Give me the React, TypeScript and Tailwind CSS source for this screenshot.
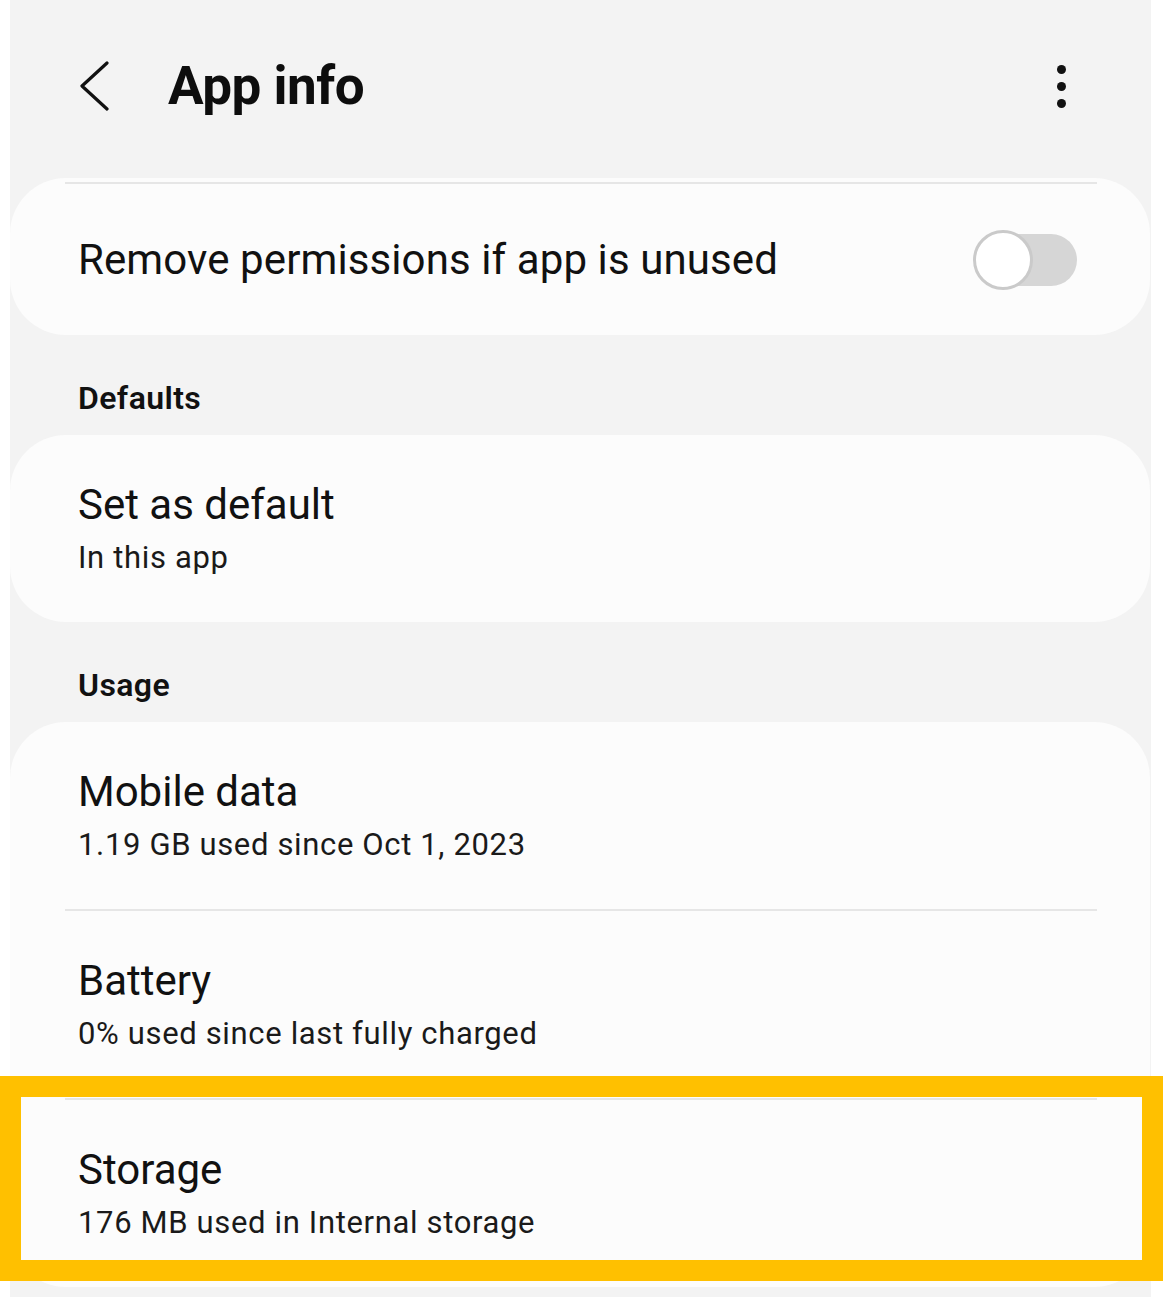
const font = { fontFamily: 'Roboto, "Noto Sans", sans-serif' };

function Divider() {
  return <div className="ml-[55px] mr-[53px] h-[2px] bg-[#e6e6e6]" />;
}

function Row({ title, sub }: { title: string; sub: string }) {
  return (
    <div className="pl-[68px] pt-[45px] pb-[44px]">
      <p className="text-[42px] leading-[50px] text-[#111]">{title}</p>
      <p className="mt-[8px] text-[31px] leading-[40px] tracking-[0.65px] text-[#1a1a1a]">{sub}</p>
    </div>
  );
}

function SectionLabel({ label }: { label: string }) {
  return (
    <div className="h-[100px] pl-[68px] pt-[46px]">
      <p className="text-[32px] leading-[34px] font-semibold tracking-[0.4px] text-[#111]">{label}</p>
    </div>
  );
}

function Toggle() {
  return (
    <div className="relative h-[60px] w-[104px]">
      {/* track */}
      <div className="absolute left-[16px] right-0 top-[4px] h-[52px] rounded-full bg-[#d6d6d6]" />
      {/* thumb */}
      <div className="absolute left-0 top-0 h-[60px] w-[60px] rounded-full border-[3px] border-[#cacaca] bg-white" />
    </div>
  );
}

function BackChevron() {
  return (
    <svg width="32" height="50" viewBox="0 0 32 50" className="ml-[68px]">
      <polyline points="29,2 4,25 29,48" fill="none" stroke="#111" strokeWidth="3.2" strokeLinecap="round" strokeLinejoin="round" />
    </svg>
  );
}

export default function App() {
  return (
    <div className="relative h-[1297px] w-[1163px] overflow-hidden bg-white" style={font}>
      <div className="ml-[10px] h-full w-[1141px] bg-[#f3f3f3]">
        {/* header */}
        <div className="flex h-[178px] items-center pb-[6px]">
          <BackChevron />
          <h1 className="ml-[58px] text-[53px] font-bold leading-none tracking-[-0.5px] text-[#0d0d0d]">App info</h1>
          <div className="ml-auto mr-[85px] flex flex-col items-center gap-[8px]">
            <span className="h-[9px] w-[9px] rounded-full bg-[#111]" />
            <span className="h-[9px] w-[9px] rounded-full bg-[#111]" />
            <span className="h-[9px] w-[9px] rounded-full bg-[#111]" />
          </div>
        </div>

        {/* unused permissions */}
        <div className="mr-[1px] rounded-[56px] bg-[#fcfcfc] pt-[4px]">
          <Divider />
          <div className="flex h-[151px] items-center pl-[68px] pr-[73px]">
            <p className="text-[42px] leading-[50px] tracking-[0.1px] text-[#111]">Remove permissions if app is unused</p>
            <div className="ml-auto">
              <Toggle />
            </div>
          </div>
        </div>

        <SectionLabel label="Defaults" />
        <div className="mr-[1px] rounded-[56px] bg-[#fcfcfc]">
          <Row title="Set as default" sub="In this app" />
        </div>

        <SectionLabel label="Usage" />
        <div className="mr-[1px] rounded-[56px] bg-[#fcfcfc]">
          <Row title="Mobile data" sub="1.19 GB used since Oct 1, 2023" />
          <Divider />
          <Row title="Battery" sub="0% used since last fully charged" />
          <Divider />
          <Row title="Storage" sub="176 MB used in Internal storage" />
        </div>
      </div>

      {/* highlight annotation */}
      <div className="absolute left-0 top-[1076px] h-[205px] w-[1163px] border-[21px] border-[#ffc000]" />
    </div>
  );
}
